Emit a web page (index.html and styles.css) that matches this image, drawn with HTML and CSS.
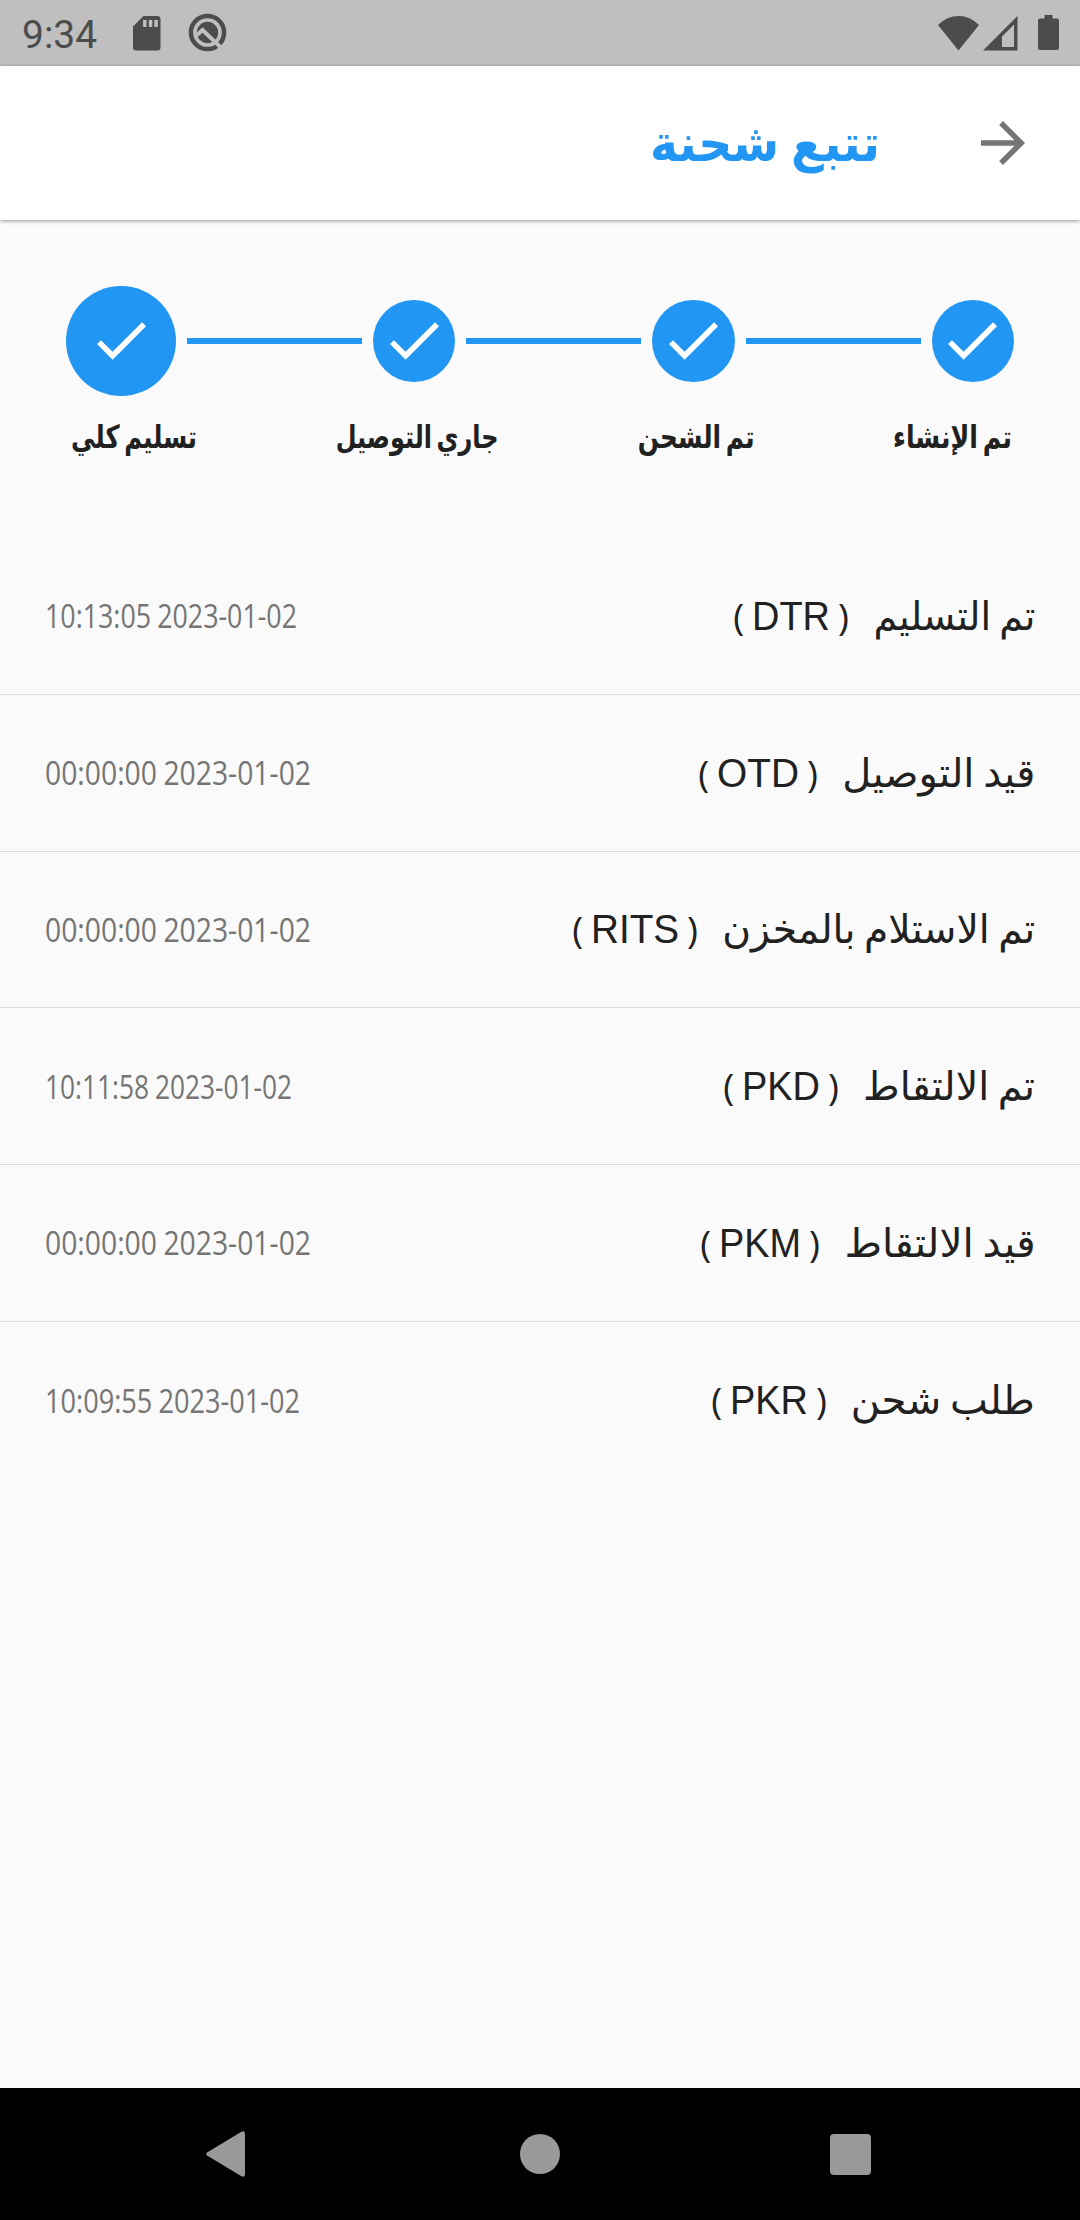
FILE: index.html
```html
<!DOCTYPE html>
<html lang="ar" dir="rtl">

<head>
    <meta charset="UTF-8">
    <meta name="viewport" content="width=device-width, initial-scale=1.0">
    <title>تتبع شحنة</title>
    <link rel="stylesheet" href="styles.css">
</head>

<body>
    <div class="status-bar" dir="ltr">
        <span class="clock">9:34</span>
        <svg class="icon-sd" width="28" height="35" viewBox="0 0 28 35">
            <path fill-rule="evenodd" d="M10.500 0H24.500a3 3 0 0 1 3 3v28.500a3 3 0 0 1-3 3H3a3 3 0 0 1-3-3V10.500zM10 4v7h3.500V4zM15.800 4v7h3.500V4zM21.300 4v7h3.500V4z" />
        </svg>
        <svg class="icon-q" width="40" height="40" viewBox="0 0 40 40">
            <circle class="ring" cx="19.500" cy="19.500" r="16.600" />
            <circle cx="19.500" cy="19.500" r="10.700" />
            <path class="cut" d="M8.500 22.500l6-5.500L34.500 36" />
        </svg>
        <span class="spacer"></span>
        <svg class="icon-wifi" width="42" height="35" viewBox="0 0 42 35">
            <path d="M0 9Q9 0 20.500 0T41 9L20.500 34.500z" />
        </svg>
        <svg class="icon-signal" width="35" height="35" viewBox="0 0 35 35">
            <path fill-rule="evenodd" d="M34.500 0v34.500H0zM31 8.500L19 20.500V31h12z" />
        </svg>
        <svg class="icon-battery" width="22" height="36" viewBox="0 0 22 36">
            <path d="M6.500 0h8v3.500H19a2 2 0 0 1 2 2V33a2 2 0 0 1-2 2H2a2 2 0 0 1-2-2V5.500a2 2 0 0 1 2-2h4.500z" />
        </svg>
    </div>

    <header>
        <svg class="back" width="44" height="44" viewBox="4 4 16 16">
            <path d="M12 4l-1.410 1.410L16.170 11H4v2h12.170l-5.580 5.590L12 20l8-8z" />
        </svg>
        <h1><span class="fit" data-width="230">تتبع شحنة</span></h1>
    </header>

    <main>
        <div class="stepper" id="stepper"></div>
        <div class="labels">
            <span class="fit" data-width="119">تم الإنشاء</span>
            <span class="fit" data-width="117">تم الشحن</span>
            <span class="fit" data-width="163">جاري التوصيل</span>
            <span class="fit" data-width="126">تسليم كلي</span>
        </div>
        <div class="events" id="events"></div>
    </main>

    <nav dir="ltr">
        <svg class="nav-back" width="39" height="46" viewBox="0 0 39 46">
            <path d="M1 21.500L35 1q4-2 4 2v40q0 4-4 2L1 24.500q-1.500-1.500 0-3z" />
        </svg>
        <span class="home"></span>
        <span class="recent"></span>
    </nav>

    <script>
        const events = [
            { title: "تم التسليم", width: 162, code: "DTR", codeWidth: 78, date: "10:13:05 2023-01-02", dateWidth: 252 },
            { title: "قيد التوصيل", width: 193, code: "OTD", codeWidth: 82, date: "00:00:00 2023-01-02", dateWidth: 266 },
            { title: "تم الاستلام بالمخزن", width: 313, code: "RITS", codeWidth: 88, date: "00:00:00 2023-01-02", dateWidth: 266 },
            { title: "تم الالتقاط", width: 172, code: "PKD", codeWidth: 78, date: "10:11:58 2023-01-02", dateWidth: 247 },
            { title: "قيد الالتقاط", width: 191, code: "PKM", codeWidth: 82, date: "00:00:00 2023-01-02", dateWidth: 266 },
            { title: "طلب شحن", width: 184, code: "PKR", codeWidth: 78, date: "10:09:55 2023-01-02", dateWidth: 255 }
        ];

        const check = `<svg width="49" height="38" viewBox="3.400 5.600 17.600 13.400">
            <path d="M9 16.170L4.830 12l-1.420 1.410L9 19 21 7l-1.410-1.410z" /></svg>`;

        function drawSteps() {
            const steps = ["", "", "", "current"];
            document.getElementById("stepper").innerHTML = steps
                .map(s => `<div class="step ${s}">${check}</div>`)
                .join(`<div class="line"></div>`);
        }

        function drawEvents() {
            document.getElementById("events").innerHTML = events.map(e => `
                <div class="event">
                    <div class="event-title">
                        <span class="fit" data-width="${e.width}">${e.title}</span>
                        <span class="code" dir="ltr"><i>(</i><span class="fit" data-width="${e.codeWidth}">${e.code}</span><i>)</i></span>
                    </div>
                    <div class="date" dir="ltr"><span class="fit" data-width="${e.dateWidth}">${e.date}</span></div>
                </div>`).join("");
        }

        function fitTexts() {
            document.querySelectorAll(".fit").forEach(el => {
                const width = Number(el.dataset.width);
                const inner = document.createElement("span");
                inner.textContent = el.textContent;
                el.replaceChildren(inner);
                inner.style.transform = `scaleX(${width / inner.getBoundingClientRect().width})`;
                el.style.width = width + "px";
            });
        }

        drawSteps();
        drawEvents();
        fitTexts();
    </script>
</body>

</html>
```
FILE: styles.css
```css
* {
    box-sizing: border-box;
}

body {
    margin: 0;
    width: 1080px;
    height: 2220px;
    display: flex;
    flex-direction: column;
    overflow: hidden;
    background: #fafafa;
    color: #212121;
    font-family: "DejaVu Sans", sans-serif;
}

svg {
    display: block;
    flex: none;
}

.status-bar {
    height: 66px;
    flex: none;
    padding: 0 20px 0 22px;
    display: flex;
    align-items: center;
    background: #bfbfbf;
    fill: #4c4c4c;
    color: #4c4c4c;
}

.clock {
    width: 111px;
    font: 39px/66px Roboto, sans-serif;
    padding-top: 3px;
}

.icon-q {
    margin-left: 27px;
}

.ring {
    fill: none;
    stroke: #4c4c4c;
    stroke-width: 4.5;
}

.cut {
    fill: none;
    stroke: #bfbfbf;
    stroke-width: 4;
}

.spacer {
    flex: 1;
}

.icon-signal {
    margin-left: 3px;
}

.icon-battery {
    margin-left: 20px;
}

header {
    height: 154px;
    flex: none;
    display: flex;
    align-items: center;
    padding-right: 55px;
    background: white;
    box-shadow: 0 1px 4px rgba(0, 0, 0, 0.4);
}

.back {
    fill: #757575;
}

h1 {
    margin: 2px 101px 0 0;
    color: #2196f3;
    font-size: 51px;
    line-height: 70px;
    word-spacing: -5px;
}

.fit {
    display: block;
    white-space: nowrap;
}

.fit span {
    display: inline-block;
    transform-origin: right;
}

[dir="ltr"] .fit span {
    transform-origin: left;
}

main {
    flex: 1;
}

.stepper {
    height: 110px;
    margin: 66px 66px 0;
    display: flex;
    align-items: center;
    gap: 11px;
}

.step {
    width: 82.5px;
    height: 82.5px;
    flex: none;
    display: flex;
    align-items: center;
    justify-content: center;
    border-radius: 50%;
    background: #2196f3;
    fill: white;
}

.step.current {
    width: 110px;
    height: 110px;
}

.line {
    flex: 1;
    height: 6px;
    background: #2196f3;
}

.labels {
    height: 82px;
    padding: 0 68px 0 71px;
    display: flex;
    align-items: center;
    justify-content: space-between;
    font-size: 32px;
    font-weight: bold;
    word-spacing: -5px;
}

.events {
    margin-top: 60px;
}

.event {
    height: 156.75px;
    padding: 0 45px;
    display: flex;
    align-items: center;
    justify-content: space-between;
    border-bottom: 1px solid #dcdcdc;
}

.event:last-child {
    border-bottom: none;
}

.event-title {
    display: flex;
    align-items: center;
    gap: 24px;
    font-size: 40px;
    word-spacing: -4px;
}

.code {
    display: flex;
    align-items: center;
    gap: 8px;
    font: 41px/60px "Liberation Sans", sans-serif;
}

.code i {
    font: 37px/52px "Open Sans", sans-serif;
}

.date {
    color: #757575;
    font: 32px/48px "Open Sans", sans-serif;
    word-spacing: -1px;
    padding-top: 1px;
}

nav {
    height: 132px;
    flex: none;
    display: flex;
    align-items: center;
    padding: 0 209px 0 206px;
    justify-content: space-between;
    background: black;
    fill: #999;
}

.home {
    width: 40px;
    height: 40px;
    margin-left: 4px;
    border-radius: 50%;
    background: #999;
}

.recent {
    width: 41px;
    height: 41px;
    border-radius: 4px;
    background: #999;
}
```
